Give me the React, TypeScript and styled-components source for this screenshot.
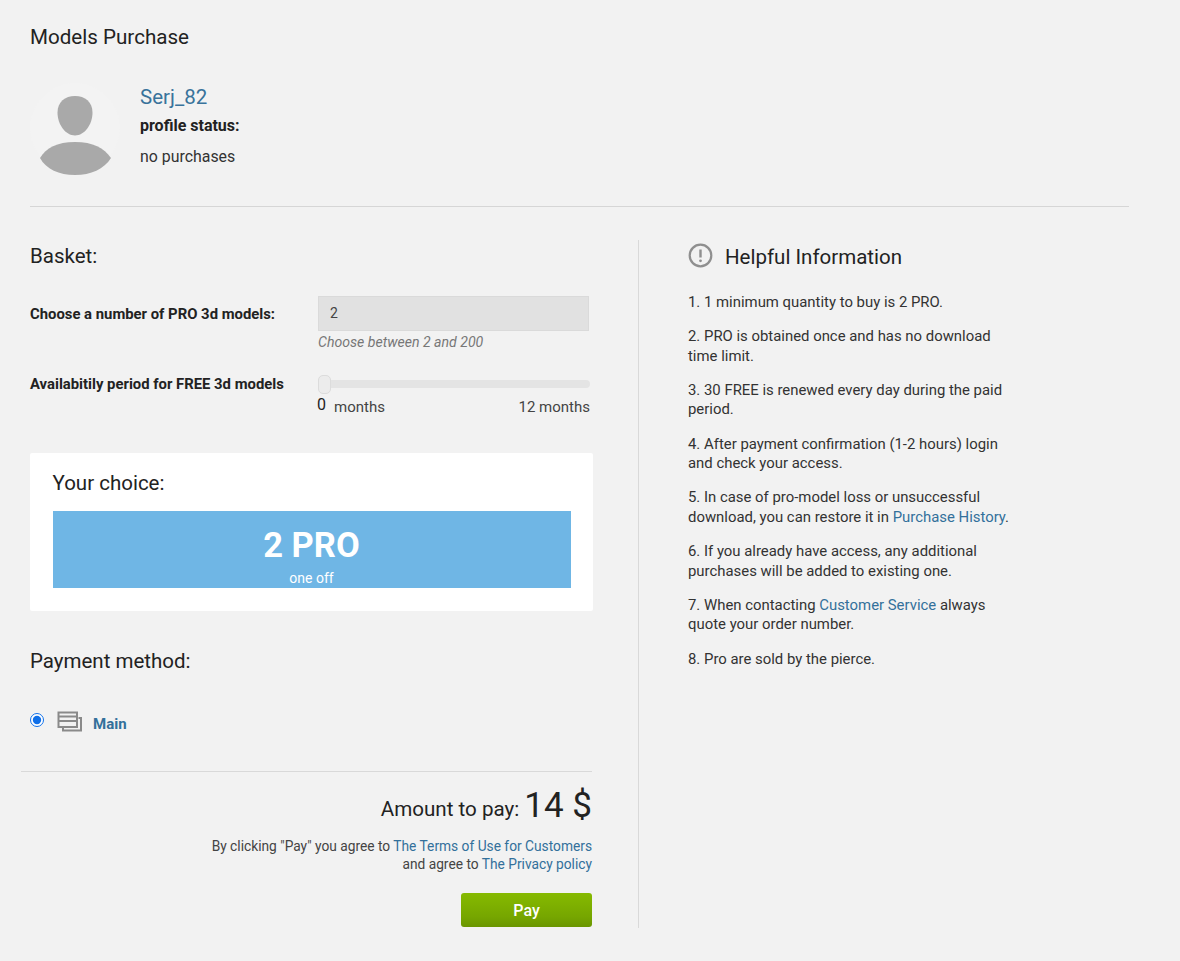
import React from 'react';
import styled, { createGlobalStyle } from 'styled-components';

const GlobalStyle = createGlobalStyle`
  html, body {
    margin: 0;
    padding: 0;
    background: #f2f2f2;
    color: #222;
    font-family: Roboto, "Liberation Sans", sans-serif;
  }
`;

const Page = styled.div`
  width: 1180px;
  height: 961px;
  box-sizing: border-box;
  padding: 24px 51px 0 30px;
  overflow: hidden;
`;

const PageTitle = styled.h1`
  margin: 0;
  font-size: 20.6px;
  line-height: 26px;
  font-weight: 400;
  color: #222;
`;

const Profile = styled.div`
  display: flex;
  gap: 20px;
  margin-top: 33px;
  height: 102px;
  border-bottom: 1px solid #d6d6d6;
  padding-bottom: 21px;
`;

const Avatar = styled.div`
  width: 90px;
  height: 90px;
  border-radius: 50%;
  background: #f3f3f3;
  flex: none;
  svg { display: block; overflow: visible; }
`;

const ProfileInfo = styled.div`
  display: flex;
  flex-direction: column;
  padding-top: 1px;
`;

const UserName = styled.a`
  font-size: 20.5px;
  line-height: 26px;
  color: #39739b;
`;

const StatusLabel = styled.b`
  font-size: 16px;
  line-height: 18px;
  margin-top: 7px;
  font-weight: 700;
`;

const StatusValue = styled.span`
  font-size: 15.9px;
  line-height: 18px;
  margin-top: 13px;
  color: #333;
`;

const Columns = styled.div`
  display: flex;
  margin-top: 33px;
`;

const LeftColumn = styled.section`
  width: 563px;
  flex: none;
  padding-top: 3px;
`;

const RightColumn = styled.section`
  margin-left: 45px;
  padding-left: 49px;
  border-left: 1px solid #d9d9d9;
  height: 688px;
  box-sizing: border-box;
`;

const SectionTitle = styled.h2`
  margin: 0;
  font-size: 20.5px;
  line-height: 26px;
  font-weight: 400;
  color: #222;
`;

const FormRow = styled.div<{ $top: number }>`
  display: flex;
  margin-top: ${(p) => p.$top}px;
`;

const FieldLabel = styled.label<{ $offset: number }>`
  width: 288px;
  flex: none;
  padding-top: ${(p) => p.$offset}px;
  font-size: 14.85px;
  font-weight: 700;
  line-height: 18px;
`;

const FieldBody = styled.div`
  width: 272px;
`;

const NumberBox = styled.div`
  height: 35px;
  width: 271px;
  box-sizing: border-box;
  background: #e1e1e1;
  border: 1px solid #dadada;
  padding-left: 11px;
  font-size: 14px;
  line-height: 33px;
  color: #444;
`;

const Hint = styled.div`
  margin-top: 2px;
  font-size: 14.1px;
  line-height: 18px;
  font-style: italic;
  color: #777;
`;

const SliderTrack = styled.div`
  position: relative;
  height: 8px;
  margin-top: 5px;
  border-radius: 4px;
  background: #e4e4e4;
`;

const SliderThumb = styled.div`
  position: absolute;
  left: 0;
  top: -5px;
  width: 13px;
  height: 19px;
  box-sizing: border-box;
  border: 1px solid #dcdcdc;
  border-radius: 5px;
  background: #ececec;
`;

const SliderScale = styled.div`
  display: flex;
  align-items: flex-start;
  margin-top: 9px;
  font-size: 15px;
  line-height: 20px;
  color: #444;
`;

const SliderZero = styled.span`
  color: #222;
  width: 17px;
  margin: -2px 0 0 -1px;
  font-size: 16px;
`;

const SliderMax = styled.span`
  margin-left: auto;
`;

const ChoiceCard = styled.div`
  margin-top: 36px;
  background: #fff;
  border-radius: 2px;
  padding: 17px 22.5px 23px 22.5px;
  height: 158px;
  box-sizing: border-box;
`;

const ChoiceBanner = styled.div`
  margin-top: 15px;
  height: 77px;
  background: #6fb6e5;
  color: #fff;
  text-align: center;
  padding-top: 14px;
  box-sizing: border-box;
`;

const ChoiceAmount = styled.div`
  font-size: 34.5px;
  line-height: 40px;
  font-weight: 700;
`;

const ChoiceNote = styled.div`
  font-size: 14px;
  line-height: 18px;
  margin-top: 4px;
  font-weight: 400;
`;

const PaymentTitle = styled(SectionTitle)`
  margin-top: 37px;
`;

const PaymentOption = styled.div`
  display: flex;
  align-items: center;
  margin-top: 37px;
  height: 26px;
`;

const Radio = styled.input`
  width: 14px;
  height: 14px;
  margin: 0 0 8px 0;
  accent-color: #0f6fe8;
  flex: none;
`;

const CardIcon = styled.svg`
  margin: 0 0 2px 13px;
  flex: none;
`;

const MethodName = styled.a`
  margin-left: 10px;
  font-size: 15px;
  font-weight: 700;
  color: #33709b;
`;

const Checkout = styled.div`
  margin: 34px 0 0 -9px;
  width: 571px;
  border-top: 1px solid #d9d9d9;
  text-align: right;
`;

const AmountLine = styled.div`
  margin-top: 10px;
  display: flex;
  justify-content: flex-end;
  align-items: baseline;
  gap: 5px;
  font-size: 20.6px;
  line-height: 46px;
  height: 46px;
`;

const AmountValue = styled.span`
  font-size: 35px;
  transform: translateY(1px);
`;

const Terms = styled.p`
  margin: 9px 0 0;
  font-size: 13.75px;
  line-height: 18px;
  color: #444;
`;

const TextLink = styled.a`
  color: #33709b;
`;

const PayButton = styled.button`
  display: block;
  margin: 20px 0 0 auto;
  width: 131px;
  height: 34px;
  border: 0;
  border-radius: 3px;
  background: linear-gradient(#86ba00, #76a600 70%, #6a9600);
  color: #fff;
  font: 500 16px Roboto, sans-serif;
`;

const InfoHeader = styled.div`
  display: flex;
  align-items: center;
  gap: 12px;
`;

const InfoTitle = styled.h2`
  margin: 3px 0 0;
  font-size: 20.5px;
  line-height: 28px;
  font-weight: 400;
  color: #222;
`;

const InfoList = styled.div`
  margin-top: 22px;
  width: 330px;
`;

const InfoItem = styled.p`
  margin: 0 0 14.9px;
  font-size: 14.9px;
  line-height: 19.4px;
  color: #333;
`;

const items: React.ReactNode[] = [
  '1. 1 minimum quantity to buy is 2 PRO.',
  '2. PRO is obtained once and has no download time limit.',
  '3. 30 FREE is renewed every day during the paid period.',
  '4. After payment confirmation (1-2 hours) login and check your access.',
  <>
    5. In case of pro-model loss or unsuccessful download, you can restore it in{' '}
    <TextLink>Purchase History</TextLink>.
  </>,
  '6. If you already have access, any additional purchases will be added to existing one.',
  <>
    7. When contacting <TextLink>Customer Service</TextLink> always quote your order number.
  </>,
  '8. Pro are sold by the pierce.',
];

const App: React.FC = () => (
  <Page>
    <GlobalStyle />
    <PageTitle>Models Purchase</PageTitle>

    <Profile>
      <Avatar>
        <svg width="90" height="94" viewBox="0 0 90 94">
          <path d="M45 13c10 0 17.500 6 17.500 16.500 0 12-8 23-17.500 23s-17.500-11-17.500-23C27.500 19 35 13 45 13z" fill="#a9a9a9" />
          <path d="M45 59c18 0 29 6 36 16-7 11-20 17-36 17S16 86 10 75c6-10 17-16 35-16z" fill="#a9a9a9" />
        </svg>
      </Avatar>
      <ProfileInfo>
        <UserName>Serj_82</UserName>
        <StatusLabel>profile status:</StatusLabel>
        <StatusValue>no purchases</StatusValue>
      </ProfileInfo>
    </Profile>

    <Columns>
      <LeftColumn>
        <SectionTitle>Basket:</SectionTitle>

        <FormRow $top={27}>
          <FieldLabel $offset={9}>Choose a number of PRO 3d models:</FieldLabel>
          <FieldBody>
            <NumberBox>2</NumberBox>
            <Hint>Choose between 2 and 200</Hint>
          </FieldBody>
        </FormRow>

        <FormRow $top={24}>
          <FieldLabel $offset={0}>Availabitily period for FREE 3d models</FieldLabel>
          <FieldBody>
            <SliderTrack>
              <SliderThumb />
            </SliderTrack>
            <SliderScale>
              <SliderZero>0</SliderZero>
              <span>months</span>
              <SliderMax>12 months</SliderMax>
            </SliderScale>
          </FieldBody>
        </FormRow>

        <ChoiceCard>
          <SectionTitle>Your choice:</SectionTitle>
          <ChoiceBanner>
            <ChoiceAmount>2 PRO</ChoiceAmount>
            <ChoiceNote>one off</ChoiceNote>
          </ChoiceBanner>
        </ChoiceCard>

        <PaymentTitle>Payment method:</PaymentTitle>
        <PaymentOption>
          <Radio type="radio" defaultChecked readOnly />
          <CardIcon width="26" height="24" viewBox="0 0 26 24" fill="none" stroke="#8a8a8a" strokeWidth="2">
            <rect x="1.500" y="1.500" width="18.500" height="14.500" />
            <path d="M1.500 5.500h18.500M1.500 10h18.500" />
            <path d="M6 16.500v3h18V7h-2.500" />
          </CardIcon>
          <MethodName>Main</MethodName>
        </PaymentOption>

        <Checkout>
          <AmountLine>
            Amount to pay: <AmountValue>14 $</AmountValue>
          </AmountLine>
          <Terms>
            By clicking "Pay" you agree to <TextLink>The Terms of Use for Customers</TextLink>
            <br />
            and agree to <TextLink>The Privacy policy</TextLink>
          </Terms>
          <PayButton>Pay</PayButton>
        </Checkout>
      </LeftColumn>

      <RightColumn>
        <InfoHeader>
          <svg width="25" height="25" viewBox="0 0 25 25" fill="none">
            <circle cx="12.500" cy="12.500" r="10.800" stroke="#8f8f8f" strokeWidth="2.200" />
            <path d="M12.500 6.500v8" stroke="#8f8f8f" strokeWidth="2.400" />
            <circle cx="12.500" cy="17.800" r="1.400" fill="#8f8f8f" />
          </svg>
          <InfoTitle>Helpful Information</InfoTitle>
        </InfoHeader>
        <InfoList>
          {items.map((item, i) => (
            <InfoItem key={i}>{item}</InfoItem>
          ))}
        </InfoList>
      </RightColumn>
    </Columns>
  </Page>
);

export default App;
